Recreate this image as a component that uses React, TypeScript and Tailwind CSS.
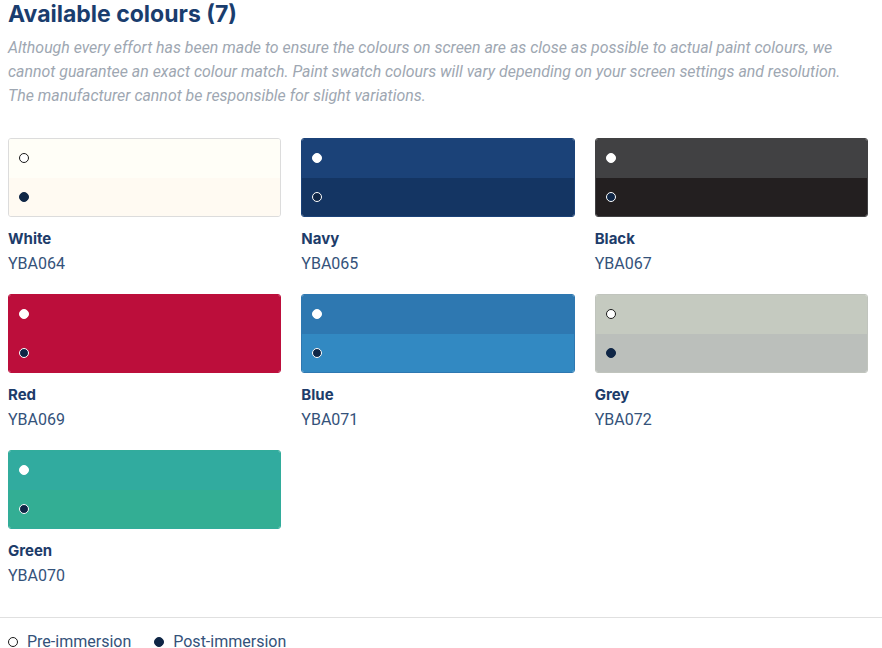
import React from 'react'

type Swatch = {
  name: string
  code: string
  top: string
  bottom: string
  border: string
  preDot: string
  postDot: string
}

const SWATCHES: Swatch[] = [
  {
    name: 'White',
    code: 'YBA064',
    top: 'bg-[#fffef7]',
    bottom: 'bg-[#fffaf2]',
    border: 'border-[#dcdcdc]',
    preDot: 'bg-white border-[#1a1a1a]',
    postDot: 'bg-[#0f2646] border-[#0f2646]',
  },
  {
    name: 'Navy',
    code: 'YBA065',
    top: 'bg-[#1b4278]',
    bottom: 'bg-[#143563]',
    border: 'border-[#1b4278]',
    preDot: 'bg-white border-white',
    postDot: 'bg-[#0f2646] border-white',
  },
  {
    name: 'Black',
    code: 'YBA067',
    top: 'bg-[#414143]',
    bottom: 'bg-[#231f20]',
    border: 'border-[#414143]',
    preDot: 'bg-white border-white',
    postDot: 'bg-[#0f2646] border-white',
  },
  {
    name: 'Red',
    code: 'YBA069',
    top: 'bg-[#bc0e3b]',
    bottom: 'bg-[#bc0e3b]',
    border: 'border-[#bc0e3b]',
    preDot: 'bg-white border-white',
    postDot: 'bg-[#0f2646] border-white',
  },
  {
    name: 'Blue',
    code: 'YBA071',
    top: 'bg-[#2e78b1]',
    bottom: 'bg-[#3289c2]',
    border: 'border-[#2e78b1]',
    preDot: 'bg-white border-white',
    postDot: 'bg-[#0f2646] border-white',
  },
  {
    name: 'Grey',
    code: 'YBA072',
    top: 'bg-[#c5cac0]',
    bottom: 'bg-[#bbbfbb]',
    border: 'border-[#c0c4bd]',
    preDot: 'bg-white border-[#1a1a1a]',
    postDot: 'bg-[#0f2646] border-[#0f2646]',
  },
  {
    name: 'Green',
    code: 'YBA070',
    top: 'bg-[#31ab9f]',
    bottom: 'bg-[#33ae94]',
    border: 'border-[#32ac9b]',
    preDot: 'bg-white border-white',
    postDot: 'bg-[#0f2646] border-white',
  },
]

function Dot({ className }: { className: string }) {
  return <span className={`block w-[10px] h-[10px] rounded-full border ${className}`} />
}

function SwatchCard({ s }: { s: Swatch }) {
  return (
    <div className="pb-[18px]">
      <div className={`h-[79px] rounded-[3px] border overflow-hidden flex flex-col ${s.border}`}>
        <div className={`flex-1 flex items-center pl-[10px] ${s.top}`}>
          <Dot className={s.preDot} />
        </div>
        <div className={`flex-1 flex items-center pl-[10px] ${s.bottom}`}>
          <Dot className={s.postDot} />
        </div>
      </div>
      <div className="mt-[10px] text-[15px] leading-[24px] font-bold text-[#1d3c6a] font-['Inter',sans-serif]">
        {s.name}
      </div>
      <div className="text-[16px] leading-[25px] text-[#34527a] font-['Roboto',sans-serif]">{s.code}</div>
    </div>
  )
}

export default function App() {
  return (
    <div className="w-[882px] h-[648px] overflow-hidden bg-white font-['Roboto',sans-serif]">
      <h1 className="px-[8px] text-[23px] leading-[28px] font-bold text-[#1a3d6e] font-['Inter',sans-serif]">
        Available colours (7)
      </h1>
      <p className="px-[8px] mt-[8px] text-[15.9px] leading-[24px] italic text-[#9ea7b2] whitespace-nowrap">
        Although every effort has been made to ensure the colours on screen are as close as possible to actual paint colours, we
        <br />
        cannot guarantee an exact colour match. Paint swatch colours will vary depending on your screen settings and resolution.
        <br />
        The manufacturer cannot be responsible for slight variations.
      </p>

      <div className="mt-[30px] ml-[8px] w-[860px] grid grid-cols-3 gap-x-[20px]">
        {SWATCHES.map((s) => (
          <SwatchCard key={s.code} s={s} />
        ))}
      </div>

      <div className="mt-[11px] border-t border-[#e0e0e0]" />

      <div className="flex items-center gap-[23px] pl-[8px] h-[48px] text-[16px] leading-[20px] text-[#34527a]">
        <div className="flex items-center gap-[9px]">
          <Dot className="bg-white border-[#1a1a1a]" />
          <span>Pre-immersion</span>
        </div>
        <div className="flex items-center gap-[9px]">
          <Dot className="bg-[#0f2646] border-[#0f2646]" />
          <span>Post-immersion</span>
        </div>
      </div>
    </div>
  )
}
